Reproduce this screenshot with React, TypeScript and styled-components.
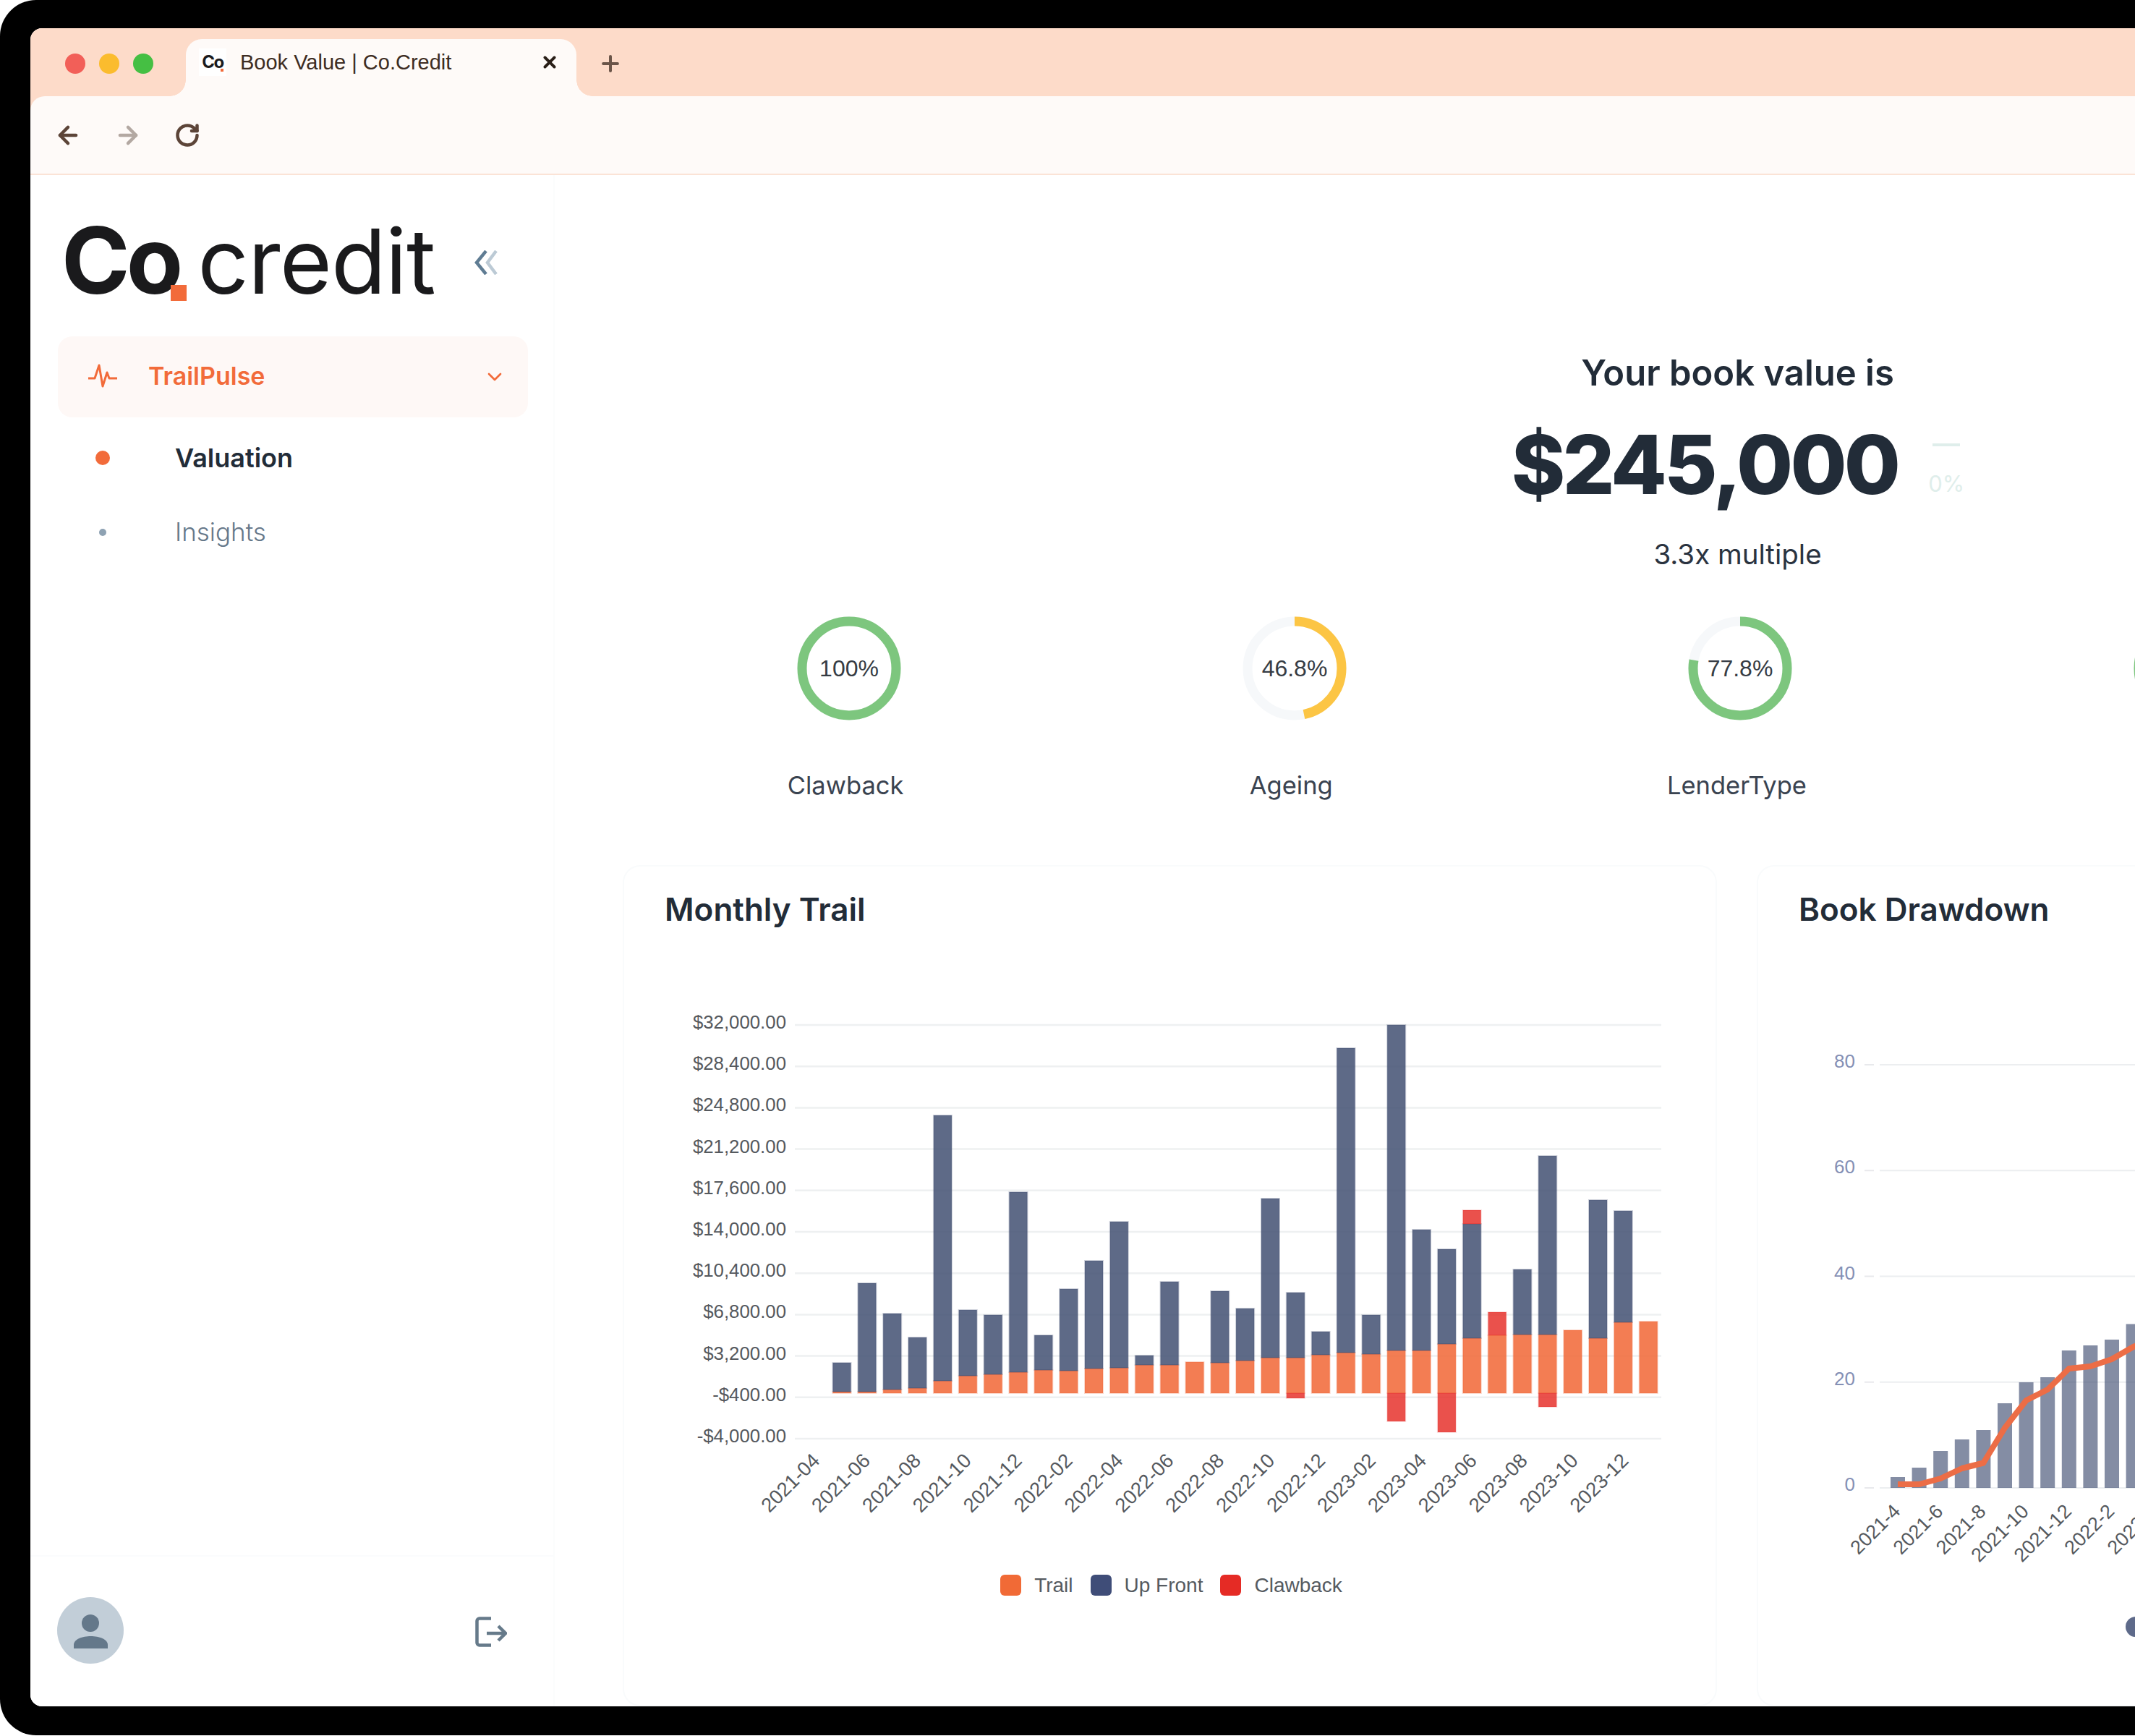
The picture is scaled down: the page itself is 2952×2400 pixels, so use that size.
import React from "react";
import styled, { createGlobalStyle } from "styled-components";
import { ArrowLeft, ArrowRight, RotateCw, Plus, X, ChevronDown } from "lucide-react";

const UI = `Inter, "Liberation Sans", sans-serif`;
const ARIAL = `"Liberation Sans", Arial, sans-serif`;

const Global = createGlobalStyle`
  html, body { margin: 0; padding: 0; background: #fff; overflow: hidden; }
  #root { width: 2952px; height: 2400px; overflow: hidden; }
  * { box-sizing: border-box; }
`;

const Bezel = styled.div`
  width: 3100px;
  height: 2399px;
  background: #000;
  border-radius: 50px;
  padding: 39px 60px 40px 42px;
`;
const Win = styled.div`
  height: 100%;
  background: #fff;
  border-radius: 16px;
  overflow: hidden;
  display: flex;
  flex-direction: column;
`;
const Chrome = styled.div`
  background: #fddbc9;
  flex: none;
`;
const TabStrip = styled.div`
  height: 94px;
  padding-left: 48px;
  display: flex;
  align-items: flex-start;
`;
const Lights = styled.div`
  display: flex;
  gap: 19px;
  margin-top: 35px;
`;
const Light = styled.span<{ $c: string }>`
  width: 28px;
  height: 28px;
  border-radius: 50%;
  background: ${(p) => p.$c};
`;
const Tab = styled.div`
  position: relative;
  width: 540px;
  height: 79px;
  margin: 15px 0 0 45px;
  padding: 0 24px 15px 18px;
  background: #fefaf8;
  border-radius: 22px 22px 0 0;
  display: flex;
  align-items: center;
  gap: 19px;
  &::before, &::after {
    content: "";
    position: absolute;
    bottom: 0;
    width: 22px;
    height: 22px;
  }
  &::before { left: -22px; background: radial-gradient(circle at 0 0, transparent 21.5px, #fefaf8 22px); }
  &::after { right: -22px; background: radial-gradient(circle at 100% 0, transparent 21.5px, #fefaf8 22px); }
`;
const Favicon = styled.div`
  position: relative;
  width: 38px;
  height: 38px;
  background: #fff;
  font: 700 24px/38px ${UI};
  letter-spacing: -1.5px;
  text-align: center;
  color: #1b1b1d;
  flex: none;
  &::after {
    content: "";
    position: absolute;
    right: 4px;
    bottom: 6px;
    width: 4px;
    height: 4px;
    background: #f26b3a;
  }
`;
const TabTitle = styled.span`
  font: 400 29px/36px ${ARIAL};
  color: #3d2c22;
`;
const TabClose = styled.span`
  margin-left: auto;
  display: flex;
  color: #2a1f18;
`;
const NewTab = styled.span`
  margin: 32px 0 0 30px;
  display: flex;
  color: #6b5549;
`;
const Toolbar = styled.div`
  height: 109px;
  background: #fefaf8;
  border-radius: 20px 0 0 0;
  border-bottom: 2px solid #fbe3d6;
  padding-left: 33px;
  display: flex;
  align-items: center;
  gap: 45px;
`;
const NavIcon = styled.span<{ $off?: boolean }>`
  display: flex;
  color: ${(p) => (p.$off ? "#b3a8a2" : "#5c4438")};
`;

const Body = styled.div`
  flex: 1;
  min-height: 0;
  display: flex;
  background: #fff;
`;
const Sidebar = styled.aside`
  width: 725px;
  flex: none;
  border-right: 2px solid #fbfcfd;
  display: flex;
  flex-direction: column;
`;
const LogoRow = styled.div`
  margin-top: 53px;
  padding-left: 43px;
  height: 130px;
  display: flex;
  align-items: center;
`;
const Logo = styled.div`
  display: flex;
  align-items: baseline;
  color: #1a1a1c;
  white-space: nowrap;
`;
const LogoCo = styled.span`
  position: relative;
  font: 700 128px/130px ${UI};
  letter-spacing: -5px;
  margin-right: 25px;
  &::after {
    content: "";
    position: absolute;
    right: -10px;
    bottom: 9px;
    width: 22px;
    height: 22px;
    background: #f26b3a;
  }
`;
const LogoCredit = styled.span`
  font: 400 124px/130px ${UI};
  letter-spacing: -1px;
`;
const Collapse = styled.svg`
  margin: 6px 0 0 55px;
  flex: none;
`;
const NavGroup = styled.div`
  margin: 40px 0 4px 38px;
  width: 650px;
  height: 112px;
  flex: none;
  padding: 0 30px 2px 42px;
  background: #fef8f6;
  border-radius: 20px;
  display: flex;
  align-items: center;
  gap: 43px;
  color: #f26b3a;
  font: 600 34px/1 ${UI};
`;
const NavChevron = styled.span`
  margin-left: auto;
  display: flex;
  padding-top: 2px;
`;
const NavItem = styled.div<{ $active?: boolean }>`
  height: 103px;
  margin-left: 80px;
  display: flex;
  align-items: center;
  gap: 80px;
  color: ${(p) => (p.$active ? "#222c38" : "#66788a")};
  font: ${(p) => (p.$active ? 600 : 300)} ${(p) => (p.$active ? 36 : 35)}px/1 ${UI};
`;
const DotSlot = styled.span`
  width: 40px;
  display: flex;
  justify-content: center;
`;
const Bullet = styled.i<{ $active?: boolean }>`
  display: block;
  width: ${(p) => (p.$active ? 20 : 10)}px;
  height: ${(p) => (p.$active ? 20 : 10)}px;
  border-radius: 50%;
  background: ${(p) => (p.$active ? "#f26b3a" : "#8ea2b3")};
`;
const SideFooter = styled.div`
  margin-top: auto;
  height: 209px;
  padding: 57px 64px 60px 37px;
  border-top: 2px solid #fbfcfd;
  display: flex;
  align-items: center;
  justify-content: space-between;
`;
const Avatar = styled.div`
  width: 92px;
  height: 92px;
  border-radius: 50%;
  background: #c2ced8;
  display: flex;
`;
const LogoutIcon = styled.svg`
  margin-top: 4px;
`;

const Main = styled.main`
  width: 3269px;
  flex: none;
  padding: 244px 94px 0;
  display: flex;
  flex-direction: column;
  align-items: stretch;
`;
const HeroTitle = styled.div`
  text-align: center;
  font: 600 49px/60px ${UI};
  color: #222c38;
  padding-left: 2px;
`;
const AmountRow = styled.div`
  margin-top: 31px;
  padding-left: 3px;
  display: flex;
  justify-content: center;
  align-items: center;
  gap: 42px;
`;
const Amount = styled.div`
  font: 800 113px/130px ${UI};
  letter-spacing: -3.8px;
  color: #222c38;
`;
const Delta = styled.div`
  display: flex;
  flex-direction: column;
  align-items: center;
  gap: 32px;
  padding-top: 17px;
  color: #dfeeeb;
  font: 400 31px/40px ${UI};
`;
const DeltaDash = styled.span`
  width: 38px;
  height: 4px;
  background: #dfeeeb;
`;
const Multiple = styled.div`
  margin-top: 34px;
  padding-left: 2px;
  text-align: center;
  font: 400 38.5px/50px ${UI};
  color: #2a3340;
`;
const GaugeRow = styled.div`
  margin-top: 61px;
  display: grid;
  grid-template-columns: repeat(5, 1fr);
`;
const GaugeCol = styled.div`
  display: flex;
  flex-direction: column;
  align-items: center;
`;
const GaugeSvg = styled.svg`
  display: block;
  margin-left: 9px;
`;
const GaugeLabel = styled.div`
  margin-top: 68px;
  min-height: 44px;
  font: 400 34.5px/44px ${UI};
  color: #3a4350;
`;
const Cards = styled.div`
  margin-top: 88px;
  flex: 1;
  display: flex;
  gap: 55px;
`;
const Card = styled.section`
  width: 1513px;
  flex: none;
  padding-top: 31px;
  border-radius: 24px;
  box-shadow: inset 0 0 0 2px #f9fbfc;
`;
const CardTitle = styled.h2`
  margin: 0 0 1px;
  padding-left: 58px;
  font: 600 44px/60px ${UI};
  color: #222c38;
`;
const ChartSvg = styled.svg`
  display: block;
`;
const Legend = styled.div`
  margin-top: 17px;
  display: flex;
  justify-content: center;
  align-items: center;
  padding-left: 4px;
  font: 400 28px/29px ${ARIAL};
  color: #555a60;
`;
const LegendItem = styled.div`
  display: flex;
  align-items: center;
  gap: 18px;
  margin-right: 24px;
  &:last-child { margin-right: 0; }
`;
const Swatch = styled.i<{ $c: string }>`
  width: 29px;
  height: 29px;
  border-radius: 6px;
  background: ${(p) => p.$c};
`;
const LegendDotRow = styled.div`
  margin-top: 23px;
  padding-left: 510px;
`;
const LegendDot = styled.i`
  display: block;
  width: 30px;
  height: 28px;
  border-radius: 14px;
  background: #5e6a8a;
`;

const ticks = ["$32,000.00","$28,400.00","$24,800.00","$21,200.00","$17,600.00","$14,000.00","$10,400.00","$6,800.00","$3,200.00","-$400.00","-$4,000.00"];
const months = ["2021-04","2021-06","2021-08","2021-10","2021-12","2022-02","2022-04","2022-06","2022-08","2022-10","2022-12","2023-02","2023-04","2023-06","2023-08","2023-10","2023-12"];
const stacks: [number, number | null, number | null][] = [
  [1924,1884,null],[1924,1774,null],[1921,1816,null],[1919,1849,null],[1909,1542,null],[1902,1811,null],[1900,1818,null],[1897,1648,null],
  [1894,1846,null],[1895,1782,null],[1892,1743,null],[1891,1689,null],[1887,1874,null],[1887,1772,null],[1883,null,null],[1884,1785,null],
  [1881,1809,null],[1877,1657,null],[1877,1787,1933],[1873,1841,null],[1870,1449,null],[1872,1818,null],[1867,1417,1965],[1867,1700,null],
  [1858,1727,1980],[1850,1692,1673],[1846,null,1814],[1845,1755,null],[1845,1598,1945],[1839,null,null],[1850,1659,null],[1828,1674,null],[1827,null,null],
];
const BASE = 1926;
const NAVY = "rgba(63,77,112,.84)";
const NAVY_E = "rgba(63,77,112,.25)";
const ORANGE = "rgba(241,100,50,.84)";
const ORANGE_E = "rgba(241,100,50,.25)";
const RED = "rgba(229,43,37,.82)";

function Rect({ x, y0, y1, fill, edge }: { x: number; y0: number; y1: number; fill: string; edge: string }) {
  return <rect x={x - 12.5} y={Math.min(y0, y1)} width={25} height={Math.abs(y1 - y0)} fill={fill} stroke={edge} strokeWidth={2} />;
}

function TrailChart() {
  return (
    <ChartSvg width={1513} height={872} viewBox="861 1288 1513 872">
      {ticks.map((t, i) => {
        const y = 1417 + i * 57.2;
        return (
          <g key={t}>
            <line x1={1099} x2={2297} y1={y} y2={y} stroke="#eef0f1" strokeWidth={2.5} />
            <text x={1087} y={y + 5} textAnchor="end" fontFamily={ARIAL} fontSize={25.8} fill="#55595e">{t}</text>
          </g>
        );
      })}
      {stacks.map(([o, n, r], i) => {
        const x = 1164 + i * 34.85;
        return (
          <g key={i}>
            <Rect x={x} y0={BASE} y1={o} fill={ORANGE} edge={ORANGE_E} />
            {n !== null && <Rect x={x} y0={o} y1={n} fill={NAVY} edge={NAVY_E} />}
            {r !== null && r > BASE && <Rect x={x} y0={BASE} y1={r} fill={RED} edge="rgba(229,43,37,.15)" />}
            {r !== null && r < BASE && <Rect x={x} y0={n ?? o} y1={r} fill={RED} edge="rgba(229,43,37,.15)" />}
          </g>
        );
      })}
      {months.map((m, i) => {
        const ax = 1135 + i * 69.9;
        const ay = 2021;
        return (
          <text key={m} x={ax} y={ay} textAnchor="end" transform={`rotate(-45 ${ax} ${ay})`} fontFamily={ARIAL} fontSize={27.5} fill="#55595e">{m}</text>
        );
      })}
    </ChartSvg>
  );
}

const dTicks = [80, 60, 40, 20, 0];
const dTops = [2042, 2029, 2006, 1990, 1977, 1940, 1911, 1904, 1867, 1860, 1852, 1830.5];
const dLine = [2052, 2052, 2044, 2030, 2022.5, 1974, 1936, 1921, 1892, 1889, 1879, 1862, 1850];
const dMonths = ["2021-4", "2021-6", "2021-8", "2021-10", "2021-12", "2022-2", "2022-4"];

function DrawdownChart() {
  const pts = dLine.map((y, i) => `${2624 + i * 29.6},${y}`).join(" ");
  return (
    <ChartSvg width={1513} height={924} viewBox="2429 1288 1513 924">
      {dTicks.map((t, i) => {
        const y = 1472 + i * 146.25;
        return (
          <g key={t}>
            <line x1={2578} x2={2591} y1={y} y2={y} stroke="#e8e9ec" strokeWidth={2} />
            <line x1={2599} x2={3942} y1={y} y2={y} stroke="#eceef0" strokeWidth={2} />
            <text x={2565} y={y + 4} textAnchor="end" fontFamily={ARIAL} fontSize={26} fill="#8590b5">{t}</text>
          </g>
        );
      })}
      {dTops.map((y, i) => (
        <rect key={i} x={2624 + i * 29.6 - 10} y={y} width={20} height={2057 - y} fill="rgba(63,77,112,.64)" />
      ))}
      <polyline points={pts} fill="none" stroke="#ec6d46" strokeWidth={8} strokeLinejoin="round" />
      {dMonths.map((m, i) => {
        const ax = 2629 + i * 59.2;
        const ay = 2091;
        return (
          <text key={m} x={ax} y={ay} textAnchor="end" transform={`rotate(-45 ${ax} ${ay})`} fontFamily={ARIAL} fontSize={27} fill="#55595e">{m}</text>
        );
      })}
    </ChartSvg>
  );
}

function Gauge({ value, color, text }: { value: number; color: string; text?: string }) {
  return (
    <GaugeSvg width={144} height={144} viewBox="0 0 144 144">
      <circle cx={72} cy={72} r={65} fill="none" stroke="#f6f8fa" strokeWidth={13} />
      <circle
        cx={72}
        cy={72}
        r={65}
        fill="none"
        stroke={color}
        strokeWidth={13}
        pathLength={100}
        strokeDasharray={`${value} 100`}
        transform="rotate(-90 72 72)"
      />
      {text && (
        <text x={72} y={83} textAnchor="middle" fontFamily={ARIAL} fontSize={32} fill="#363c44">{text}</text>
      )}
    </GaugeSvg>
  );
}

const gauges = [
  { value: 100, color: "#7dc67e", text: "100%", label: "Clawback" },
  { value: 46.8, color: "#fcc544", text: "46.8%", label: "Ageing" },
  { value: 77.8, color: "#7dc67e", text: "77.8%", label: "LenderType" },
  { value: 100, color: "#7dc67e", text: "", label: "" },
  { value: 100, color: "#7dc67e", text: "", label: "" },
];

export default function App() {
  return (
    <>
      <Global />
      <Bezel>
        <Win>
          <Chrome>
            <TabStrip>
              <Lights>
                <Light $c="#f25f58" />
                <Light $c="#fbbc2e" />
                <Light $c="#45bf43" />
              </Lights>
              <Tab>
                <Favicon>Co</Favicon>
                <TabTitle>Book Value | Co.Credit</TabTitle>
                <TabClose><X size={26} strokeWidth={3.6} /></TabClose>
              </Tab>
              <NewTab><Plus size={34} strokeWidth={2.8} /></NewTab>
            </TabStrip>
            <Toolbar>
              <NavIcon><ArrowLeft size={38} strokeWidth={2.8} /></NavIcon>
              <NavIcon $off><ArrowRight size={38} strokeWidth={2.8} /></NavIcon>
              <NavIcon><RotateCw size={36} strokeWidth={3} /></NavIcon>
            </Toolbar>
          </Chrome>
          <Body>
            <Sidebar>
              <LogoRow>
                <Logo>
                  <LogoCo>Co</LogoCo>
                  <LogoCredit>credit</LogoCredit>
                </Logo>
                <Collapse width={34} height={34} viewBox="0 0 34 34" fill="none" strokeWidth={4.5}>
                  <path d="M30 1 L18 17 L30 33" stroke="#bccad5" />
                  <path d="M16 1 L3 17 L16 33" stroke="#5f7c93" />
                </Collapse>
              </LogoRow>
              <NavGroup>
                <svg width={40} height={34} viewBox="0 0 40 34" fill="none" stroke="#f26b3a" strokeWidth={3} strokeLinejoin="round">
                  <path d="M0 20 H9 L15 2 L20 31 L26 12 L29 20 H40" />
                </svg>
                TrailPulse
                <NavChevron><ChevronDown size={32} strokeWidth={2} /></NavChevron>
              </NavGroup>
              <NavItem $active>
                <DotSlot><Bullet $active /></DotSlot>
                Valuation
              </NavItem>
              <NavItem>
                <DotSlot><Bullet /></DotSlot>
                Insights
              </NavItem>
              <SideFooter>
                <Avatar>
                  <svg width={92} height={92} viewBox="0 0 92 92" fill="#64788a">
                    <circle cx={46} cy={36} r={12} />
                    <path d="M23 71 V66 C23 58 35 54 46.5 54 C58 54 70 58 70 66 V71 Z" />
                  </svg>
                </Avatar>
                <LogoutIcon width={44} height={42} viewBox="0 0 44 42" fill="none" stroke="#667a8a" strokeWidth={4.5}>
                  <path d="M22 2.5 H6 a3.5 3.5 0 0 0 -3.5 3.5 V36 a3.5 3.5 0 0 0 3.5 3.5 H22" />
                  <path d="M16 23 H41 M32 13 L42 23 L32 33" />
                </LogoutIcon>
              </SideFooter>
            </Sidebar>
            <Main>
              <HeroTitle>Your book value is</HeroTitle>
              <AmountRow>
                <Amount>$245,000</Amount>
                <Delta>
                  <DeltaDash />
                  0%
                </Delta>
              </AmountRow>
              <Multiple>3.3x multiple</Multiple>
              <GaugeRow>
                {gauges.map((g, i) => (
                  <GaugeCol key={i}>
                    <Gauge value={g.value} color={g.color} text={g.text} />
                    <GaugeLabel>{g.label}</GaugeLabel>
                  </GaugeCol>
                ))}
              </GaugeRow>
              <Cards>
                <Card>
                  <CardTitle>Monthly Trail</CardTitle>
                  <TrailChart />
                  <Legend>
                    <LegendItem><Swatch $c="#f16a36" />Trail</LegendItem>
                    <LegendItem><Swatch $c="#3f4d78" />Up Front</LegendItem>
                    <LegendItem><Swatch $c="#e52b25" />Clawback</LegendItem>
                  </Legend>
                </Card>
                <Card>
                  <CardTitle>Book Drawdown</CardTitle>
                  <DrawdownChart />
                  <LegendDotRow><LegendDot /></LegendDotRow>
                </Card>
              </Cards>
            </Main>
          </Body>
        </Win>
      </Bezel>
    </>
  );
}
